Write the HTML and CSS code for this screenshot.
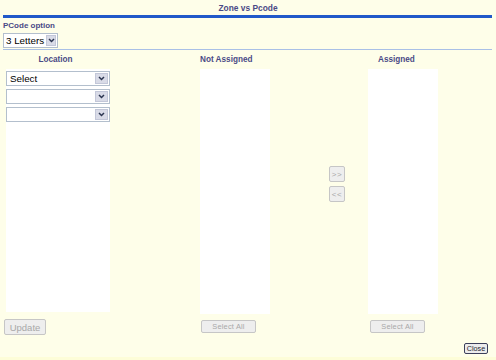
FILE: index.html
```html
<!DOCTYPE html>
<html>
<head>
<meta charset="utf-8">
<title>Zone vs Pcode</title>
<link rel="stylesheet" href="styles.css">
</head>
<body>
<div class="page">
  <div class="title">Zone vs Pcode</div>
  <div class="bar"></div>
  <div class="option">
    <div class="label">PCode option</div>
    <div class="sel sel-small">
      <span class="sel-text">3 Letters</span>
      <span class="sel-btn"><svg width="7" height="5" viewBox="0 0 7 5"><path d="M1 1 L3.5 3.5 L6 1" fill="none" stroke="#2b3550" stroke-width="1.5"/></svg></span>
    </div>
  </div>
  <div class="rule"></div>
  <div class="cols">
    <div class="col col-loc">
      <div class="head">Location</div>
      <div class="box loc-box">
        <div class="sel sel-wide">
          <span class="sel-text">Select</span>
          <span class="sel-btn"><svg width="7" height="5" viewBox="0 0 7 5"><path d="M1 1 L3.5 3.5 L6 1" fill="none" stroke="#2b3550" stroke-width="1.5"/></svg></span>
        </div>
        <div class="sel sel-wide">
          <span class="sel-text"></span>
          <span class="sel-btn"><svg width="7" height="5" viewBox="0 0 7 5"><path d="M1 1 L3.5 3.5 L6 1" fill="none" stroke="#2b3550" stroke-width="1.5"/></svg></span>
        </div>
        <div class="sel sel-wide">
          <span class="sel-text"></span>
          <span class="sel-btn"><svg width="7" height="5" viewBox="0 0 7 5"><path d="M1 1 L3.5 3.5 L6 1" fill="none" stroke="#2b3550" stroke-width="1.5"/></svg></span>
        </div>
      </div>
      <button class="btn btn-update" disabled>Update</button>
    </div>
    <div class="col col-na">
      <div class="head head-na">Not Assigned</div>
      <div class="box list"></div>
      <button class="btn btn-all" disabled>Select All</button>
    </div>
    <div class="col col-mid">
      <button class="btn btn-move" disabled>&gt;&gt;</button>
      <button class="btn btn-move" disabled>&lt;&lt;</button>
    </div>
    <div class="col col-as">
      <div class="head head-as">Assigned</div>
      <div class="box list"></div>
      <button class="btn btn-all btn-all2" disabled>Select All</button>
    </div>
  </div>
  <div class="foot">
    <button class="btn-close">Close</button>
  </div>
</div>
<div class="band"></div>
</body>
</html>
```

FILE: styles.css
```css
html, body {
  margin: 0;
  padding: 0;
}
body {
  height: 360px;
  display: flex;
  flex-direction: column;
  background: #fefee9;
  font-family: "Liberation Sans", Arial, sans-serif;
  color: #4a4a86;
  overflow: hidden;
}
.page {
  flex: 1;
  display: flex;
  flex-direction: column;
}
.title {
  padding-top: 4px;
  height: 9px;
  line-height: 9px;
  font-size: 8.4px;
  font-weight: bold;
  text-align: center;
  margin-bottom: 2px;
}
.bar {
  height: 3px;
  background: #2159c9;
  margin: 0 4px 0 3px;
}
.option {
  padding-left: 3px;
  margin-top: 3px;
}
.label {
  font-size: 8px;
  font-weight: bold;
  height: 10px;
  line-height: 10px;
}
.sel {
  box-sizing: border-box;
  display: flex;
  align-items: stretch;
  background: #fff;
  border: 1px solid #b3bfcd;
  color: #000;
  font-size: 9.8px;
}
.sel-small {
  margin-top: 2px;
  width: 55px;
  height: 15px;
}
.sel-text {
  flex: 1;
  padding-left: 2px;
  line-height: 13px;
  white-space: nowrap;
  overflow: hidden;
}
.sel-btn {
  width: 8px;
  margin: 1px;
  background: #d9dbe7;
  border: 1px solid #c3c7d8;
  display: flex;
  align-items: center;
  justify-content: center;
}
.sel-wide .sel-btn {
  width: 11px;
}
.sel-wide {
  width: 104px;
  height: 15px;
  margin-bottom: 3px;
}
.sel-wide .sel-text {
  line-height: 13px;
  padding-left: 3px;
}
.rule {
  height: 1px;
  background: #a9c0e6;
  margin: 1px 4px 0 3px;
}
.cols {
  display: flex;
  align-items: flex-start;
}
.col {
  display: flex;
  flex-direction: column;
}
.col-loc {
  width: 111px;
}
.col-na {
  width: 70px;
  margin-left: 89px;
}
.col-mid {
  width: 16px;
  margin-left: 59px;
  padding-top: 116px;
  gap: 4px;
}
.col-as {
  width: 70px;
  margin-left: 23px;
}
.head {
  margin-top: 5px;
  height: 10px;
  line-height: 10px;
  font-size: 8.2px;
  font-weight: bold;
  text-align: center;
  white-space: nowrap;
}
.head-na {
  text-align: left;
}
.head-as {
  text-align: left;
  padding-left: 10px;
}
.box {
  margin-top: 4px;
  background: #fff;
}
.loc-box {
  box-sizing: border-box;
  margin-left: 6px;
  width: 104px;
  height: 243px;
  padding-top: 2px;
}
.list {
  height: 245px;
}
.btn {
  box-sizing: border-box;
  font-family: "Liberation Sans", Arial, sans-serif;
  background: #eeeeee;
  border: 1px solid #c6c6c6;
  border-radius: 2px;
  color: #a8a8a8;
  padding: 0;
  margin: 0;
}
.btn-update {
  margin-top: 7px;
  margin-left: 4px;
  width: 42px;
  height: 16px;
  font-size: 9.5px;
}
.btn-all {
  margin-top: 6px;
  margin-left: 1px;
  width: 55px;
  height: 13px;
  font-size: 7.4px;
  letter-spacing: 0.2px;
}
.btn-all2 {
  margin-left: 2px;
}
.btn-move {
  width: 16px;
  height: 16px;
  font-size: 8px;
  letter-spacing: 0.5px;
}
.foot {
  display: flex;
  justify-content: flex-end;
  padding-right: 8px;
  margin-top: 8px;
}
.btn-close {
  box-sizing: border-box;
  width: 24px;
  height: 11px;
  padding: 0;
  margin: 0;
  font-family: "Liberation Sans", Arial, sans-serif;
  font-size: 7.2px;
  line-height: 8px;
  color: #1e1e2e;
  background: #ececec;
  border: 1px solid #3c3f5a;
  border-radius: 2px;
}
.band {
  height: 3px;
  background: #fdfdd8;
}
```
